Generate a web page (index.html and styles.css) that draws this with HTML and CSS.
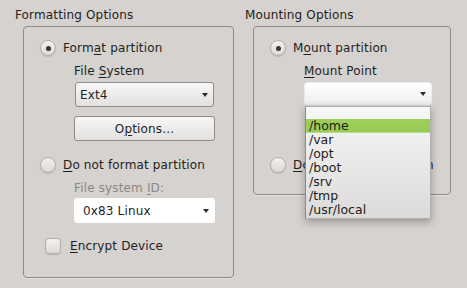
FILE: index.html
```html
<!DOCTYPE html>
<html lang="en">
<head>
  <meta charset="UTF-8">
  <title>Partition Options</title>
  <link rel="stylesheet" href="styles.css">
</head>
<body>
  <main class="dialog">
    <section class="group group-format">
      <div class="group-title">Formatting Options</div>
      <div class="group-box">
        <div class="radio-row">
          <span class="radio checked"></span>
          <span>Form<u>a</u>t partition</span>
        </div>
        <div class="sub">
          <div class="field-label">File <u>S</u>ystem</div>
          <div class="combo combo-ext">
            <span>Ext4</span>
            <span class="arrow"></span>
          </div>
          <div class="button">O<u>p</u>tions...</div>
        </div>

        <div class="radio-row second">
          <span class="radio"></span>
          <span><u>D</u>o not format partition</span>
        </div>
        <div class="sub">
          <div class="field-label disabled">File system <u>I</u>D:</div>
          <div class="combo combo-white">
            <span>0x83 Linux</span>
            <span class="arrow"></span>
          </div>
        </div>

        <div class="check-row">
          <span class="checkbox"></span>
          <span><u>E</u>ncrypt Device</span>
        </div>
      </div>
    </section>

    <section class="group group-mount">
      <div class="group-title">Mounting Options</div>
      <div class="group-box">
        <div class="radio-row">
          <span class="radio checked"></span>
          <span>M<u>o</u>unt partition</span>
        </div>
        <div class="sub">
          <div class="field-label"><u>M</u>ount Point</div>
          <div class="combo-wrap">
            <div class="combo combo-mount">
              <span></span>
              <span class="arrow"></span>
            </div>
            <ul class="popup">
              <li class="empty"></li>
              <li class="selected">/home</li>
              <li>/var</li>
              <li>/opt</li>
              <li>/boot</li>
              <li>/srv</li>
              <li>/tmp</li>
              <li>/usr/local</li>
            </ul>
          </div>
        </div>

        <div class="radio-row second-mount">
          <span class="radio"></span>
          <span><u>D</u>o not mount partition</span>
        </div>
      </div>
    </section>
  </main>
</body>
</html>
```

FILE: styles.css
```css
* {
  box-sizing: border-box;
}

body {
  margin: 0;
  background-color: #d6d2cf;
  font-family: 'DejaVu Sans', sans-serif;
  font-size: 12px;
  letter-spacing: 0.15px;
  color: #221f1e;
  width: 467px;
  height: 288px;
  overflow: hidden;
}

u {
  text-decoration-thickness: 1px;
  text-underline-offset: 2px;
}

.dialog {
  display: flex;
  padding-top: 8px;
}

.group-title {
  line-height: 14px;
  height: 14px;
  margin-bottom: 4px;
}

.group-format {
  margin-left: 15px;
}

.group-format .group-box {
  margin-left: 8px;
  width: 211px;
  height: 252px;
}

.group-mount {
  margin-left: 11px;
}

.group-mount .group-box {
  margin-left: 8px;
  width: 198px;
  height: 169px;
}

.group-box {
  border: 1px solid #8e8a87;
  border-radius: 4px;
  padding: 13px 0 0 16px;
  box-shadow: 0 1px 0 rgba(255, 255, 255, 0.35);
}

.radio-row, .check-row {
  display: flex;
  align-items: center;
  height: 16px;
}

.radio {
  width: 16px;
  height: 16px;
  border-radius: 50%;
  border: 1px solid #b2aeab;
  background: linear-gradient(#f3f2f1, #dcd9d7);
  box-shadow: 0 1px 1px rgba(0, 0, 0, 0.12);
  margin-right: 7px;
  display: flex;
  align-items: center;
  justify-content: center;
  flex-shrink: 0;
}

.radio.checked::after {
  content: '';
  width: 5px;
  height: 5px;
  border-radius: 50%;
  background-color: #3a3634;
}

.radio-row.second {
  margin-top: 16px;
}

.radio-row.second-mount {
  margin-top: 52px;
}

.sub {
  margin-left: 34px;
}

.field-label {
  line-height: 14px;
  margin-top: 8px;
}

.field-label.disabled {
  color: #8c8886;
}

.combo {
  display: flex;
  align-items: center;
  justify-content: space-between;
  height: 25px;
  border-radius: 3px;
}

.combo-ext {
  margin: 4px 1px 0 1px;
  width: 139px;
  border: 1px solid #8f8c89;
  background: linear-gradient(#f7f7f7, #e2e1e0);
  padding: 0 5px 0 4px;
}

.combo-white {
  margin-top: 3px;
  width: 141px;
  background-color: #fff;
  padding: 0 6px 0 9px;
}

.combo-mount {
  margin-top: 4px;
  width: 128px;
  height: 23px;
  border: 1px solid #ecebea;
  background: linear-gradient(#ffffff, #eeeeee);
  padding: 0 5px 0 6px;
}

.arrow {
  width: 0;
  height: 0;
  border-left: 3.5px solid transparent;
  border-right: 3.5px solid transparent;
  border-top: 4px solid #2e2b2a;
}

.button {
  margin-top: 9px;
  width: 141px;
  height: 25px;
  border: 1px solid #8f8c89;
  border-radius: 3px;
  background: linear-gradient(#f7f7f7, #e2e1e0);
  display: flex;
  align-items: center;
  justify-content: center;
}

.check-row {
  margin-top: 15px;
  margin-left: 5px;
}

.checkbox {
  width: 16px;
  height: 16px;
  border-radius: 4px;
  border: 1px solid #b2aeab;
  background: linear-gradient(#f3f2f1, #dcd9d7);
  box-shadow: 0 1px 1px rgba(0, 0, 0, 0.12);
  margin-right: 9px;
}

.combo-wrap {
  position: relative;
}

.popup {
  position: absolute;
  top: 24px;
  left: 1px;
  width: 126px;
  margin: 0;
  padding: 0 0 1px 0;
  list-style: none;
  border: 1px solid #b4b2b0;
  border-left-color: #8d8a88;
  background: linear-gradient(#f7f7f7, #dcdbda);
  box-shadow: 0 3px 8px rgba(0, 0, 0, 0.3);
  color: #1e1c1b;
  z-index: 2;
}

.popup li {
  height: 14px;
  line-height: 14px;
  padding-left: 3px;
  font-size: 12.5px;
  letter-spacing: 0;
}

.popup li.empty {
  height: 12px;
}

.popup li.selected {
  background: linear-gradient(#9dcf5a, #98cb55);
  border-bottom: 1px solid #b7dd8a;
  height: 14px;
  line-height: 13px;
}
```
